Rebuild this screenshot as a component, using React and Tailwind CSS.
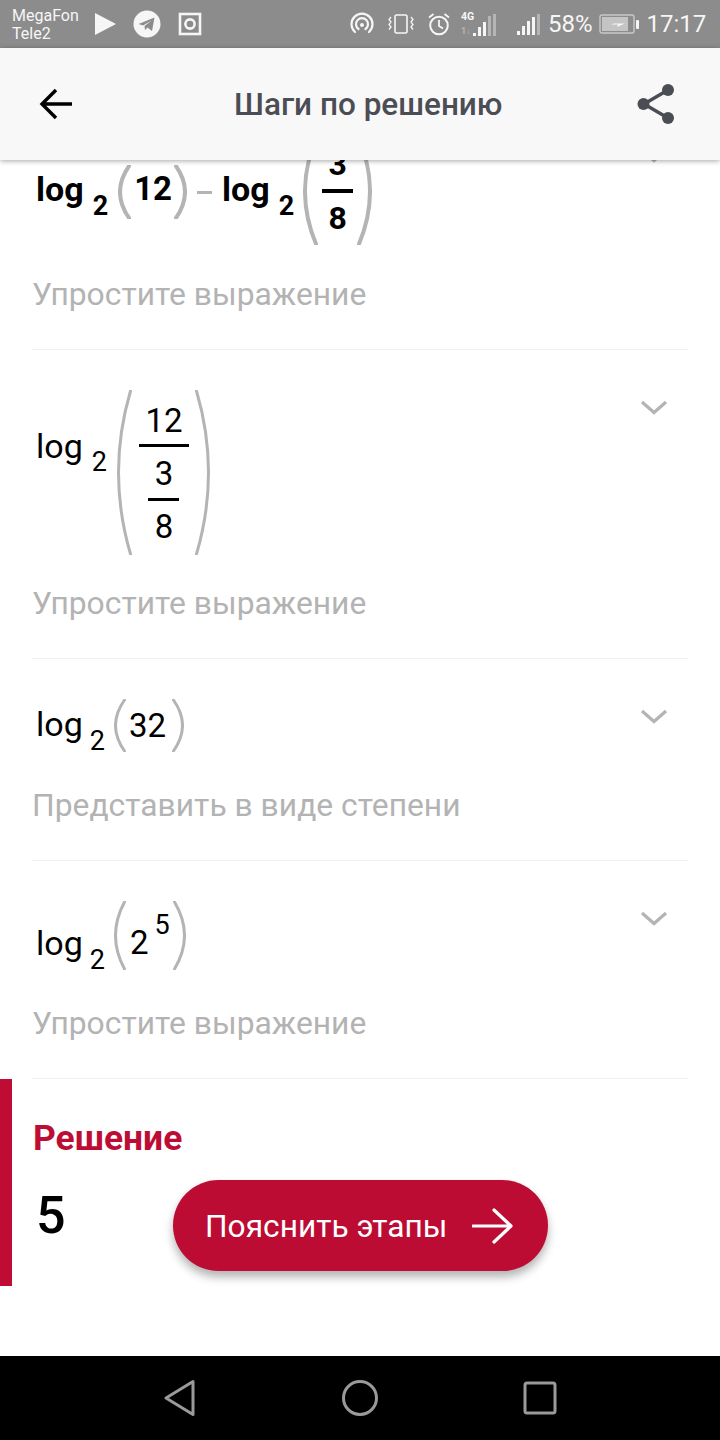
import React from "react";

const Paren = ({ w, h, right, sw = 3, className = "" }) => {
  const s = sw / 2;
  const c = 2 * s - (w - s);
  return (
    <svg width={w} height={h} viewBox={`0 0 ${w} ${h}`} className={`shrink-0 ${className}`} style={right ? { transform: "scaleX(-1)" } : undefined}>
      <path d={`M${w - s} 1 Q${c} ${h / 2} ${w - s} ${h - 1}`} fill="none" stroke="#b4b4b4" strokeWidth={sw} strokeLinecap="round" />
    </svg>
  );
};

const Log = ({ bold, className, subClass }) => (
  <div className={`flex items-start shrink-0 ${bold ? "font-bold" : ""} ${className}`}>
    <span className="text-[34px] leading-[40px]">log</span>
    <span className={`text-[27px] leading-[30px] ${subClass}`}>2</span>
  </div>
);

const Chevron = () => (
  <svg width="28" height="15" viewBox="0 0 28 15" className="mt-[10px] mr-[20px] shrink-0">
    <path d="M2 2 L14 12.5 L26 2" fill="none" stroke="#b4b4b4" strokeWidth="3.2" />
  </svg>
);

const Row = ({ math, caption, capClass, className = "" }) => (
  <div className={`mx-[32px] pt-[40px] pb-[35px] border-b border-[#f0f0f0] ${className}`}>
    <div className={`flex justify-between items-start ${capClass}`}>
      <div className="flex items-start pl-[4px] text-black">{math}</div>
      <Chevron />
    </div>
    <div className="text-[31.8px] leading-[40px] text-[#b3b3b3] whitespace-nowrap">{caption}</div>
  </div>
);

const StatusBar = () => (
  <div className="h-[48px] shrink-0 bg-[#8c8c8c] flex items-center text-[#f6f6f6]">
    <div className="ml-[12px] w-[71px] text-[16px] leading-[18px] pt-[1px]">
      <div>MegaFon</div>
      <div>Tele2</div>
    </div>
    <svg width="22" height="24" viewBox="0 0 22 24" className="ml-[12px]">
      <path d="M0 1 L21 12 L0 23 Z" fill="#f6f6f6" />
    </svg>
    <svg width="28" height="28" viewBox="0 0 28 28" className="ml-[16px]">
      <circle cx="14" cy="14" r="13.5" fill="#f6f6f6" />
      <path d="M5.5 14 L21.5 7.5 L19 21 L14.5 17.5 L12 20 L11.5 16 L18.5 10.5 L10 15.5 Z" fill="#8c8c8c" />
    </svg>
    <svg width="24" height="24" viewBox="0 0 24 24" className="ml-[17px]">
      <rect x="2" y="2" width="20" height="20" fill="none" stroke="#f6f6f6" strokeWidth="2.6" />
      <circle cx="12" cy="12" r="4.6" fill="none" stroke="#f6f6f6" strokeWidth="2.6" />
    </svg>
    <svg width="24" height="24" viewBox="0 0 24 24" className="ml-[148px]">
      <path d="M5 20 A10.5 10.5 0 1 1 19 20" fill="none" stroke="#f6f6f6" strokeWidth="2.2" strokeLinecap="round" />
      <path d="M8.5 17 A6 6 0 1 1 15.5 17" fill="none" stroke="#f6f6f6" strokeWidth="2.2" strokeLinecap="round" />
      <circle cx="12" cy="13" r="2" fill="#f6f6f6" />
    </svg>
    <svg width="26" height="22" viewBox="0 0 26 22" className="ml-[14px]">
      <rect x="7" y="2" width="12" height="18" rx="1.5" fill="none" stroke="#f6f6f6" strokeWidth="1.6" />
      <path d="M3 4 L1 6.5 L3 9 L1 11.5 L3 14 L1 16.5 M23 4 L25 6.5 L23 9 L25 11.5 L23 14 L25 16.5" fill="none" stroke="#f6f6f6" strokeWidth="1.3" />
    </svg>
    <svg width="24" height="24" viewBox="0 0 24 24" className="ml-[13px]">
      <circle cx="12" cy="13.5" r="8.8" fill="none" stroke="#f6f6f6" strokeWidth="2" />
      <path d="M12 8 V14 L16 16.5 M2 5.5 L6.5 2 M22 5.5 L17.5 2" fill="none" stroke="#f6f6f6" strokeWidth="1.8" />
    </svg>
    <div className="ml-[10px] w-[36px] h-[24px] flex items-end gap-[2px] relative">
      <span className="absolute left-0 top-[-1px] text-[10.5px] leading-[11px] font-bold">4G</span>
      <span className="absolute left-0 bottom-0 text-[9px] leading-[10px] font-bold text-[#b5b5b5]">1↓</span>
      <span className="ml-[12px] w-[3px] h-[3px] bg-[#f6f6f6]" />
      <span className="w-[3px] h-[9px] bg-[#f6f6f6]" />
      <span className="w-[3px] h-[14px] bg-[#f6f6f6]" />
      <span className="w-[3px] h-[20px] bg-[#b5b5b5]" />
      <span className="w-[3px] h-[22px] bg-[#b5b5b5]" />
    </div>
    <div className="ml-[20px] w-[24px] h-[22px] flex items-end gap-[2px]">
      <span className="w-[3px] h-[4px] bg-[#f6f6f6]" />
      <span className="w-[3px] h-[9px] bg-[#f6f6f6]" />
      <span className="w-[3px] h-[14px] bg-[#f6f6f6]" />
      <span className="w-[3px] h-[18px] bg-[#f6f6f6]" />
      <span className="w-[3px] h-[21px] bg-[#b5b5b5]" />
    </div>
    <span className="ml-[7px] text-[24px] leading-[28px]">58%</span>
    <svg width="41" height="20" viewBox="0 0 41 20" className="ml-[6px]">
      <rect x="1" y="1" width="34" height="18" rx="2" fill="none" stroke="#c8c8c8" strokeWidth="1.4" />
      <rect x="3" y="3" width="26" height="14" fill="#c4c4c4" />
      <path d="M15 9.5 H26 L18 13 L19 10.5 H12 Z" fill="#f6f6f6" />
      <rect x="37" y="6" width="3" height="9" rx="1" fill="#f6f6f6" />
    </svg>
    <span className="ml-[7px] text-[24px] leading-[28px]">17:17</span>
  </div>
);

const Header = () => (
  <div className="relative z-10 h-[112px] shrink-0 bg-[#f8f8f8] shadow-[0_1px_5px_rgba(0,0,0,0.35)] flex items-center">
    <svg width="34" height="32" viewBox="0 0 34 32" className="ml-[39px]">
      <path d="M33 16 H4 M17 2 L3 16 L17 30" fill="none" stroke="#000" strokeWidth="3.4" />
    </svg>
    <div className="ml-[161px] mt-[1px] text-[31.5px] leading-[40px] font-medium text-[#4b4d55] whitespace-nowrap">Шаги по решению</div>
    <svg width="38" height="42" viewBox="0 0 38 42" className="ml-auto mr-[45px]">
      <path d="M7 21 L31 7 M7 21 L31 35" stroke="#4b4d55" strokeWidth="3.4" />
      <circle cx="31" cy="7" r="6" fill="#4b4d55" />
      <circle cx="31" cy="35" r="6" fill="#4b4d55" />
      <circle cx="6.5" cy="21" r="6" fill="#4b4d55" />
    </svg>
  </div>
);

const NavBar = () => (
  <div className="h-[84px] shrink-0 bg-black flex items-center">
    <svg width="32" height="38" viewBox="0 0 32 38" className="ml-[164px]">
      <path d="M29 2.5 V35.5 L2 19 Z" fill="none" stroke="#9a9a9a" strokeWidth="3" strokeLinejoin="round" />
    </svg>
    <svg width="36" height="36" viewBox="0 0 36 36" className="ml-[146px]">
      <circle cx="18" cy="18" r="16.5" fill="none" stroke="#9a9a9a" strokeWidth="3" />
    </svg>
    <svg width="34" height="34" viewBox="0 0 34 34" className="ml-[145px]">
      <rect x="2" y="2" width="30" height="30" rx="2" fill="none" stroke="#9a9a9a" strokeWidth="3" />
    </svg>
  </div>
);

export default function App() {
  return (
    <div className="w-[720px] h-[1440px] flex flex-col bg-white overflow-hidden font-['Roboto',sans-serif]">
      <StatusBar />
      <Header />
      <div className="flex-1 min-h-0 overflow-hidden">
        <Row
          className="-mt-[62px]"
          capClass="h-[107px] mb-[29px]"
          caption="Упростите выражение"
          math={
            <>
              <Log bold className="mt-[31px]" subClass="ml-[9px] mt-[22px]" />
              <Paren w={13} h={54} sw={4} className="ml-[10px] mt-[27px]" />
              <span className="ml-[3px] mt-[31px] text-[33px] leading-[40px] font-bold">12</span>
              <Paren w={13} h={54} sw={4} right className="ml-[2px] mt-[27px]" />
              <div className="ml-[10px] mt-[53px] w-[15px] h-[3px] bg-[#b4b4b4]" />
              <Log bold className="ml-[10px] mt-[31px]" subClass="ml-[9px] mt-[22px]" />
              <Paren w={15} h={107} sw={4} className="ml-[9px]" />
              <div className="ml-[4px] w-[31px] flex flex-col items-center font-bold text-[32px] leading-[44px]">
                <span className="mt-[4px]">3</span>
                <div className="w-full h-[4px] bg-black mt-[3px]" />
                <span className="mt-[3px]">8</span>
              </div>
              <Paren w={15} h={107} sw={4} right className="ml-[4px]" />
            </>
          }
        />
        <Row
          capClass="h-[165px] mb-[28px]"
          caption="Упростите выражение"
          math={
            <>
              <Log className="mt-[36px]" subClass="ml-[9px] mt-[21px]" />
              <Paren w={15} h={165} className="ml-[10px]" />
              <div className="ml-[7px] w-[50px] mt-[8px] flex flex-col items-center text-[33px] leading-[46px]">
                <span>12</span>
                <div className="w-full h-[3px] bg-black" />
                <span className="mt-[4px]">3</span>
                <div className="w-[31px] h-[3px] bg-black mt-[1px]" />
                <span className="mt-[3px]">8</span>
              </div>
              <Paren w={15} h={165} right className="ml-[6px]" />
            </>
          }
        />
        <Row
          capClass="h-[53px] mb-[33px]"
          caption="Представить в виде степени"
          math={
            <>
              <Log className="mt-[5px]" subClass="ml-[7px] mt-[22px]" />
              <Paren w={12} h={53} className="ml-[9px]" />
              <span className="ml-[3px] mt-[7px] text-[33px] leading-[40px]">32</span>
              <Paren w={12} h={53} right className="ml-[6px]" />
            </>
          }
        />
        <Row
          capClass="h-[69px] mb-[33px]"
          caption="Упростите выражение"
          math={
            <>
              <Log className="mt-[22px]" subClass="ml-[7px] mt-[22px]" />
              <Paren w={12} h={69} className="ml-[9px]" />
              <span className="ml-[4px] mt-[22px] text-[33px] leading-[40px]">2</span>
              <span className="ml-[6px] mt-[9px] text-[27px] leading-[30px]">5</span>
              <Paren w={13} h={69} right className="ml-[3px]" />
            </>
          }
        />
        <div className="relative h-[207px] border-l-[12px] border-[#bf0c35] pl-[21px]">
          <div className="pt-[39px] text-[35.4px] leading-[40px] font-bold text-[#bd0d35]">Решение</div>
          <div className="mt-[28px] ml-[3px] text-[52px] leading-[60px] font-medium text-black">5</div>
          <div className="absolute left-[161px] top-[101px] w-[375px] h-[91px] rounded-full bg-[#bd0c34] shadow-[0_6px_10px_rgba(0,0,0,0.3)] flex items-center text-white">
            <span className="ml-[32px] mt-[3px] text-[31.7px] leading-[40px] whitespace-nowrap">Пояснить этапы</span>
            <svg width="42" height="40" viewBox="0 0 42 40" className="ml-[25px] mt-[1px]">
              <path d="M1 20 H38 M22 4 L39 20 L22 36" fill="none" stroke="#fff" strokeWidth="3.2" strokeLinecap="round" strokeLinejoin="round" />
            </svg>
          </div>
        </div>
      </div>
      <NavBar />
    </div>
  );
}
